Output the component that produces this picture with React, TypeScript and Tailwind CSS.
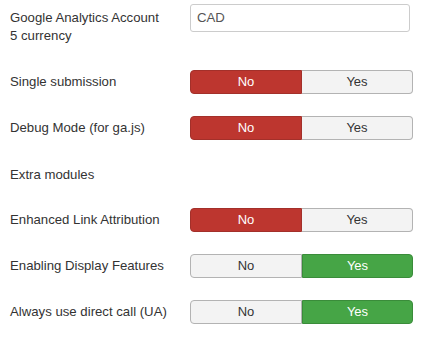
import React from "react";

function Toggle({ value }: { value: "no" | "yes" }) {
  const no = value === "no";
  return (
    <div className="flex h-[24px] w-[223px] text-[13px] leading-[18px]">
      <div
        className={
          no
            ? "flex-1 flex items-center justify-center rounded-l-[4px] border border-[#a3302a] bg-[#bd362f] text-white"
            : "flex-1 flex items-center justify-center rounded-l-[4px] border border-[#b3b3b3] bg-[#f3f3f3] text-[#333]"
        }
      >
        No
      </div>
      <div
        className={
          no
            ? "w-[111px] flex items-center justify-center rounded-r-[4px] border border-l-0 border-[#b3b3b3] bg-[#f3f3f3] text-[#333]"
            : "w-[111px] flex items-center justify-center rounded-r-[4px] border border-[#3a8c3a] bg-[#46a546] text-white"
        }
      >
        Yes
      </div>
    </div>
  );
}

function Row({ label, value, mt }: { label: string; value: "no" | "yes"; mt: string }) {
  return (
    <div className={`flex items-center ${mt}`}>
      <div className="w-[180px] leading-[18px]">{label}</div>
      <Toggle value={value} />
    </div>
  );
}

export default function App() {
  return (
    <div
      className="w-[439px] h-[346px] bg-white pl-[10px] pt-[4px] text-[13.2px] text-[#333]"
      style={{ fontFamily: '"Liberation Sans", Arial, sans-serif' }}
    >
      <div className="flex items-start">
        <div className="w-[180px] pt-[5px] leading-[18px]">
          Google Analytics Account
          <br />5 currency
        </div>
        <div className="h-[28px] w-[220px] rounded-[3px] border border-[#ccc] px-[6px] flex items-center leading-[18px] text-[#555]">
          CAD
        </div>
      </div>
      <div className="mt-[25px] flex flex-col">
        <Row label="Single submission" value="no" mt="mt-0" />
        <Row label="Debug Mode (for ga.js)" value="no" mt="mt-[22px]" />
        <div className="mt-[26px] leading-[18px]">Extra modules</div>
        <Row label="Enhanced Link Attribution" value="no" mt="mt-[24px]" />
        <Row label="Enabling Display Features" value="yes" mt="mt-[22px]" />
        <Row label="Always use direct call (UA)" value="yes" mt="mt-[22px]" />
      </div>
    </div>
  );
}
